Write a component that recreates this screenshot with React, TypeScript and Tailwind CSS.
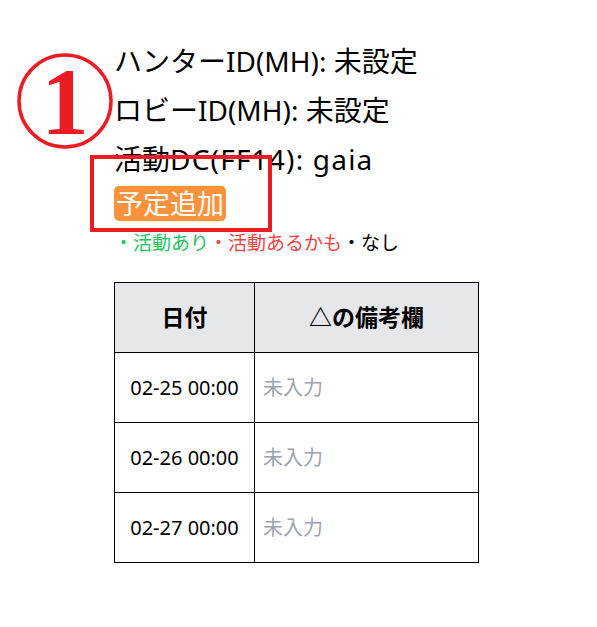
import React from "react";

const font = { fontFamily: '"Noto Sans", "Noto Sans CJK JP", sans-serif' };

export default function App() {
  const rows = ["02-25 00:00", "02-26 00:00", "02-27 00:00"];
  return (
    <div className="relative w-[597px] h-[627px] bg-white text-black" style={font}>
      <div className="pl-[114px] pt-[37px] flex flex-col items-start">
        <div className="text-[28px] leading-[49px]">ハンターID(MH): 未設定</div>
        <div className="text-[28px] leading-[49px]">ロビーID(MH): 未設定</div>
        <div className="text-[28px] leading-[49px]">
          活動<span className="tracking-[1.2px]">DC(FF14): gaia</span>
        </div>
        <div className="mt-[2px] bg-[#fb923c] text-white text-[27px] leading-[35px] px-[2px] rounded-[5px]">予定追加</div>
        <div className="mt-[8px] text-[19px] leading-[28px] flex">
          <span className="text-[#22c55e]">・活動あり</span>
          <span className="text-[#ef4444]">・活動あるかも</span>
          <span>・なし</span>
        </div>
        <table className="mt-[25px] border-collapse w-[365px]">
          <thead>
            <tr className="bg-[#e5e7eb] h-[70px]">
              <th className="border-[1.5px] border-black w-[140px] text-[23px] font-bold">日付</th>
              <th className="border-[1.5px] border-black text-[23px] font-bold">△の備考欄</th>
            </tr>
          </thead>
          <tbody>
            {rows.map((r) => (
              <tr key={r} className="h-[70px]">
                <td className="border-[1.5px] border-black text-center text-[20px]">{r}</td>
                <td className="border-[1.5px] border-black text-left pl-[8px] text-[20px] text-[#9ca3af]">未入力</td>
              </tr>
            ))}
          </tbody>
        </table>
      </div>

      {/* annotation circle ① */}
      <svg className="absolute left-[16px] top-[52px] overflow-visible" width="98" height="98" viewBox="0 0 98 98">
        <circle cx="49" cy="49" r="46" fill="none" stroke="#ed1c24" strokeWidth="3.5" />
        <text
          x="49"
          y="82"
          textAnchor="middle"
          fill="#ed1c24"
          fontSize="95"
          fontWeight="bold"
          fontFamily='"Liberation Serif", serif'
        >
          1
        </text>
      </svg>

      {/* annotation rectangle */}
      <div className="absolute left-[90px] top-[155px] w-[182px] h-[77px] border-[4px] border-[#ed1c24]" />
    </div>
  );
}
